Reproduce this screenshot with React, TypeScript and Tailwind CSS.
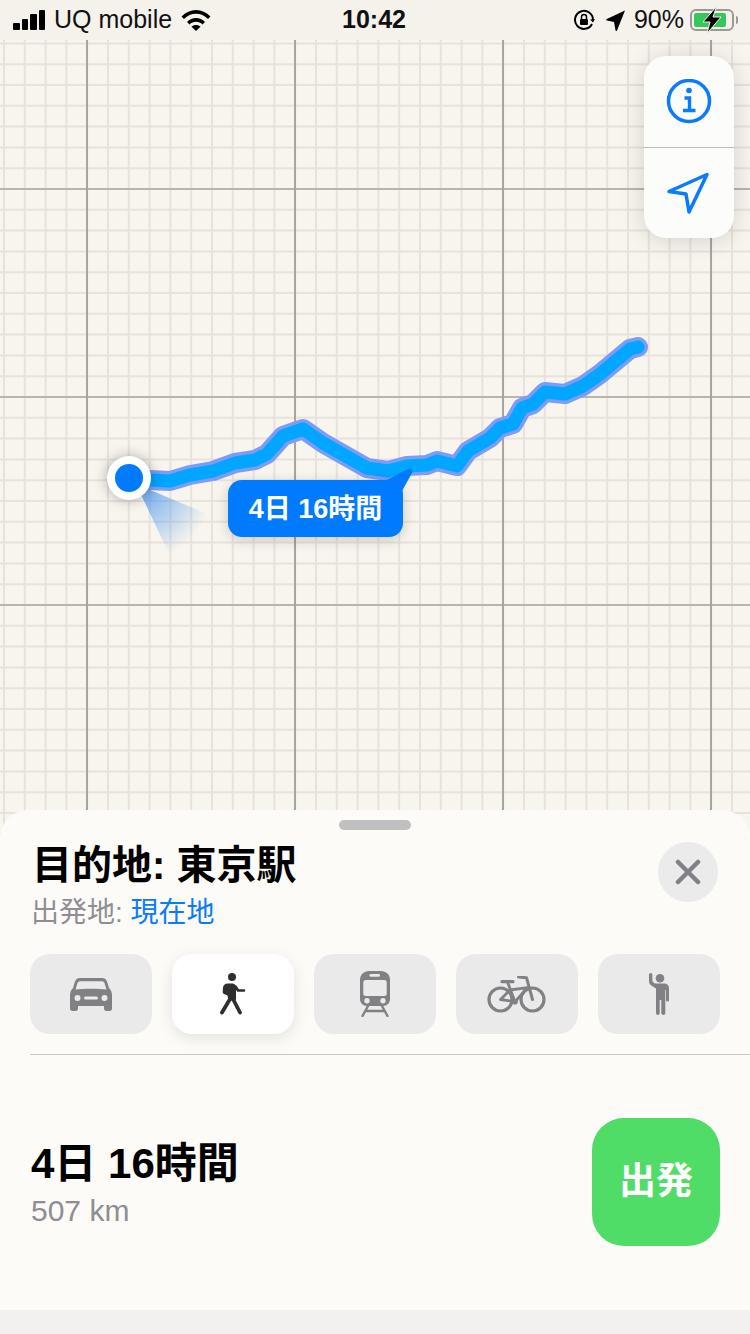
import React from "react";

const font = { fontFamily: '"Liberation Sans", "Noto Sans CJK JP", sans-serif' };

const route =
  "M150 480 L170 481 L190 475 L213 471 L235 463 L255 460 L267 454 L283 436 L303 429 L323 443 L337 451 L367 468 L388 471 L407 466 L427 465 L437 461 L457 466 L468 451 L490 438 L500 428 L513 424 L522 408 L533 404 L545 392 L565 394 L583 386 L600 374 L630 349 L638 347";

const MapLayer = () => {
  // grid lines hang off the major lines at x=87 and y=189, the svg starts under the status bar
  const minorV: number[] = [];
  for (let i = 0; i < 37; i++) minorV.push(4 + i * 20.8);
  const minorH: number[] = [];
  for (let i = 0; i < 39; i++) minorH.push(43.4 + i * 20.8);
  return (
    <svg className="absolute inset-0" width="750" height="800" viewBox="0 40 750 800">
      <defs>
        <radialGradient id="cone" gradientUnits="userSpaceOnUse" cx="136" cy="484" r="78">
          <stop offset="0" stopColor="#2f86f0" stopOpacity="0.75" />
          <stop offset="1" stopColor="#2f86f0" stopOpacity="0" />
        </radialGradient>
      </defs>
      {minorV.map((x) => (
        <line key={x} x1={x} x2={x} y1="40" y2="840" stroke="#e7e3dc" strokeWidth="2" />
      ))}
      {minorH.map((y) => (
        <line key={y} x1="0" x2="750" y1={y} y2={y} stroke="#e7e3dc" strokeWidth="2" />
      ))}
      {[87, 295, 503, 711].map((x) => (
        <line key={x} x1={x} x2={x} y1="40" y2="840" stroke="#a8a59f" strokeWidth="2" />
      ))}
      {[189, 397, 605].map((y) => (
        <line key={y} x1="0" x2="750" y1={y} y2={y} stroke="#a8a59f" strokeWidth="1.5" />
      ))}
      <path d={route} fill="none" stroke="#7d9cf8" strokeWidth="20" strokeLinejoin="round" strokeLinecap="round" />
      <path d={route} fill="none" stroke="#00a6ff" strokeWidth="13" strokeLinejoin="round" strokeLinecap="round" />
      <polygon points="136,484 212,516 172,560" fill="url(#cone)" />
    </svg>
  );
};

const CarIcon = () => (
  <svg width="42" height="33" viewBox="0 0 42 33" fill="#808085">
    <path d="M10 0H32C34.5 0 36 1 37 3.5L39 10C41 12 42 14.5 42 17V30.5C42 32 41 33 39.5 33H36.5C35 33 34 32 34 30.5V28H8V30.5C8 32 7 33 5.5 33H2.5C1 33 0 32 0 30.5V17C0 14.5 1 12 3 10L5 3.5C6 1 7.5 0 10 0z" />
    <path d="M10.5 3.2H31.5C33 3.2 34 3.8 34.5 5L36.5 11.5C30 10.5 12 10.5 5.5 11.5L7.5 5C8 3.8 9 3.2 10.5 3.2z" fill="#ebeaea" />
    <circle cx="7.5" cy="20" r="3" fill="#ebeaea" />
    <circle cx="34.5" cy="20" r="3" fill="#ebeaea" />
    <rect x="14" y="18.5" width="14" height="3" rx="1.5" fill="#ebeaea" />
  </svg>
);

const WalkIcon = () => (
  <svg width="26" height="42" viewBox="0 0 26 42" fill="none" stroke="#2f2f31" strokeLinecap="round" strokeLinejoin="round">
    <circle cx="12" cy="4" r="4" fill="#2f2f31" stroke="none" />
    <path d="M7.5 10.5H12C14.5 10.5 16 12 16 14.5V26L15 27.5H8.5L7.5 22.5 4 21C3 20.5 2.7 19.8 2.7 18.8L3 14.5C3.2 12.3 5 10.5 7.5 10.5z" fill="#2f2f31" stroke="none" />
    <path d="M15.5 13.5 18 17.5H24" strokeWidth="2.6" />
    <path d="M10 26 2 39.5" strokeWidth="3.8" />
    <path d="M12.5 25 20 39.5" strokeWidth="3.8" />
  </svg>
);

const TrainIcon = () => (
  <svg width="30" height="46" viewBox="0 0 30 46" fill="none">
    <path d="M9 0H21C26 0 30 3.5 30 9V28C30 32 27 35 23 35H7C3 35 0 32 0 28V9C0 3.5 4 0 9 0z" fill="#808085" />
    <rect x="9.5" y="3" width="10.5" height="2.8" rx="1.4" fill="#ebeaea" />
    <rect x="3.3" y="9" width="23.4" height="16" rx="2.5" fill="#ebeaea" />
    <circle cx="7" cy="29.7" r="2.7" fill="#ebeaea" />
    <circle cx="23" cy="29.7" r="2.7" fill="#ebeaea" />
    <path d="M8 35 2.5 45M22 35 27.5 45M5.5 40H24.5" stroke="#808085" strokeWidth="2.4" strokeLinecap="round" />
  </svg>
);

const BikeIcon = () => (
  <svg width="60" height="37" viewBox="0 0 60 37" fill="none" stroke="#808085" strokeLinecap="round" strokeLinejoin="round">
    <circle cx="13.5" cy="23.5" r="11.5" strokeWidth="3.2" />
    <circle cx="45.5" cy="23.5" r="11.5" strokeWidth="3.2" />
    <path d="M31.5 1 39.5 1.7 45.5 23.5" strokeWidth="3" />
    <path d="M15 5.7H26" strokeWidth="3.2" />
    <path d="M20.5 6 28 25.7 40.5 11.7 23 14 13.5 23.5 28 25.7" strokeWidth="2.8" />
    <circle cx="28" cy="25.7" r="2.8" fill="#808085" strokeWidth="0" />
  </svg>
);

const HailIcon = () => (
  <svg width="20" height="42" viewBox="0 0 20 42" fill="#808085">
    <circle cx="11" cy="5.3" r="4.3" />
    <path d="M6.5 10.5H15C18 10.5 20 12.5 20 15V27C20 28 19.3 28.5 18.5 28.5S17 28 17 27V17H16.3V40C16.3 41 15.6 42 14.5 42S12.3 41 12.3 40V27H10.7V40C10.7 41 10 42 8.9 42S7 41 7 40V15.5L3 13C1 12 0 10 0 8V2C0 .8.7 0 1.7 0S3.4.8 3.4 2V7.5C3.4 8.8 4.2 9.5 5 10z" />
  </svg>
);

const modes = [
  { key: "car", icon: <CarIcon /> },
  { key: "walk", icon: <WalkIcon />, active: true },
  { key: "train", icon: <TrainIcon /> },
  { key: "bike", icon: <BikeIcon /> },
  { key: "hail", icon: <HailIcon /> },
];

const StatusBar = () => (
  <div className="relative z-10 flex h-[40px] items-center justify-between bg-[#f5f2eb] pl-[13px] pr-[12px] text-[25px] text-[#111]" style={font}>
    <div className="flex items-center gap-[9px]">
      <div className="flex items-end gap-[2px]">
        <span className="h-[7px] w-[6.5px] rounded-[1px] bg-black" />
        <span className="h-[11px] w-[6.5px] rounded-[1px] bg-black" />
        <span className="h-[16px] w-[6.5px] rounded-[1px] bg-black" />
        <span className="h-[20px] w-[6.5px] rounded-[1px] bg-black" />
      </div>
      <span>UQ mobile</span>
      <svg width="30" height="22" viewBox="0 0 30 22">
        <path d="M.5 7.5C4.5 3.2 9.5 1 15 1s10.500 2.200 14.500 6.500L27 10C23.500 6.500 19.500 4.700 15 4.700S6.500 6.500 3 10z" />
        <path d="M6 13c2.500-2.600 5.500-4 9-4s6.500 1.400 9 4l-2.500 2.500c-1.800-1.800-4-2.800-6.500-2.800s-4.700 1-6.500 2.800z" />
        <path d="M10.500 17.700c1.200-1.200 2.700-1.800 4.500-1.800s3.300.6 4.500 1.800L15 22z" />
      </svg>
    </div>
    <span className="absolute left-[342px] font-bold">10:42</span>
    <div className="flex items-center">
      <svg width="22" height="22" viewBox="0 0 22 22" fill="none" stroke="#000" strokeWidth="2">
        <path d="M19 15a9 9 0 1 1 1-4" />
        <path d="M17 10.5l3 3 2-3.5" fill="#000" strokeWidth="0" />
        <rect x="7" y="10" width="8" height="6" rx="1" fill="#000" strokeWidth="0" />
        <path d="M8.5 10V8a2.500 2.500 0 0 1 5 0v2" strokeWidth="1.5" />
      </svg>
      <svg width="20" height="22" viewBox="0 0 20 22" className="ml-[11px]">
        <path d="M19 1.5 11 21.5c-.4.8-1.300.7-1.500-.2L8 13 1 11.5c-1-.2-1-1.100-.2-1.500z" />
      </svg>
      <span className="ml-[8px]">90%</span>
      <div className="relative ml-[6px] flex items-center">
        <div className="h-[22px] w-[44px] rounded-[6px] border-2 border-[#9b9a96] p-[2px]">
          <div className="h-full w-[88%] rounded-[2px] bg-[#34c759]" />
        </div>
        <span className="ml-[2px] h-[8px] w-[2px] rounded-r-sm bg-[#9b9a96]" />
        <svg width="22" height="28" viewBox="0 0 22 28" className="absolute left-[11px] top-[-3px]">
          <path d="M15.5 .5 2 16h7L6 27.500 20 11h-8z" stroke="#f5f2eb" strokeWidth="1" />
        </svg>
      </div>
    </div>
  </div>
);

const MapArea = () => (
  <div className="relative h-[800px] bg-[#f8f5ee]">
    <MapLayer />
    {/* side controls */}
    <div className="absolute left-[644px] top-[16px] flex w-[90px] flex-col rounded-[22px] bg-[#fcfcfb] shadow-[0_2px_24px_rgba(0,0,0,0.15)]">
      <div className="flex h-[92px] items-center justify-center border-b border-[#bbb]">
        <svg width="46" height="46" viewBox="0 0 46 46" fill="none" stroke="#0a7aff">
          <circle cx="23" cy="22" r="20.5" strokeWidth="3.5" />
          <circle cx="23" cy="11.5" r="2.8" fill="#0a7aff" stroke="none" />
          <path d="M18.5 19H23.5V31M17 31.500H29.500" strokeWidth="3.4" />
        </svg>
      </div>
      <div className="flex h-[90px] items-center justify-center">
        <svg width="46" height="46" viewBox="0 0 46 46" fill="none" stroke="#0a7aff" strokeWidth="3.5" strokeLinejoin="round">
          <path d="M41 4.5 3 21.5 20 24 23 42z" />
        </svg>
      </div>
    </div>
    {/* current location dot */}
    <div className="absolute left-[107px] top-[416px] flex h-[44px] w-[44px] items-center justify-center rounded-full bg-white shadow-[0_0_14px_rgba(0,0,0,0.3)]">
      <div className="h-[28px] w-[28px] rounded-full bg-[#007aff]" />
    </div>
    {/* duration callout */}
    <div className="absolute left-[228px] top-[440px] flex h-[57px] w-[175px] items-center justify-center rounded-[14px] bg-[#007aff] pt-[2px] text-[27px] font-bold text-white shadow-[0_3px_14px_rgba(0,0,0,0.18)]" style={font}>
      4日 16時間
      <svg width="40" height="30" viewBox="0 0 40 30" className="absolute left-[152px] top-[-13px]">
        <path d="M6 13.5 26 3C31 1 33.5 2.500 32 6L22 24H6z" fill="#007aff" />
      </svg>
    </div>
  </div>
);

export default function App() {
  return (
    <div className="relative h-[1334px] w-[750px] overflow-hidden bg-[#f2f1ef]" style={font}>
      <StatusBar />
      <MapArea />
      <div className="relative z-10 -mt-[30px] h-[500px] rounded-t-[28px] bg-[#fcfbf8]">
        <div className="flex justify-center pt-[10px]">
          <div className="h-[10px] w-[72px] rounded-full bg-[#c0c0c0]" />
        </div>
        <div className="flex items-start justify-between pl-[32px] pr-[32px] pt-[10px]">
          <div>
            <h1 className="text-[40px] leading-[50px] font-bold text-black">目的地: 東京駅</h1>
            <p className="mt-[5px] -ml-[1px] text-[28px] leading-[36px] text-[#8e8e93]">
              出発地: <span className="text-[#0a7aff]">現在地</span>
            </p>
          </div>
          <button className="mt-[2px] flex h-[60px] w-[60px] items-center justify-center rounded-full bg-[#ebebeb]">
            <svg width="26" height="26" viewBox="0 0 26 26" stroke="#808085" strokeWidth="4.5" strokeLinecap="round">
              <path d="M3 3 23 23M23 3 3 23" />
            </svg>
          </button>
        </div>
        <div className="mt-[23px] flex gap-[20px] pl-[30px]">
          {modes.map((m) => (
            <div
              key={m.key}
              className={
                m.active
                  ? "flex h-[80px] w-[122px] items-center justify-center rounded-[20px] bg-white shadow-[0_4px_16px_rgba(0,0,0,0.1)]"
                  : "flex h-[80px] w-[122px] items-center justify-center rounded-[20px] bg-[#ebeaea]"
              }
            >
              {m.icon}
            </div>
          ))}
        </div>
        <div className="ml-[30px] mt-[20px] h-px bg-[#c8c8c8]" />
        <div className="flex items-center justify-between pl-[31px] pr-[30px] pt-[63px]">
          <div>
            <p className="mt-[3px] text-[42px] leading-[50px] font-bold text-black">4日 16時間</p>
            <p className="mt-[4px] text-[30px] leading-[36px] text-[#8e8e93]">507 km</p>
          </div>
          <button className="flex h-[128px] w-[128px] items-center justify-center rounded-[32px] bg-[#4fdd67] text-[37px] font-bold text-white">
            出発
          </button>
        </div>
      </div>
      <div className="absolute bottom-0 left-0 z-20 h-[24px] w-full bg-[#f2f1ef]" />
    </div>
  );
}
